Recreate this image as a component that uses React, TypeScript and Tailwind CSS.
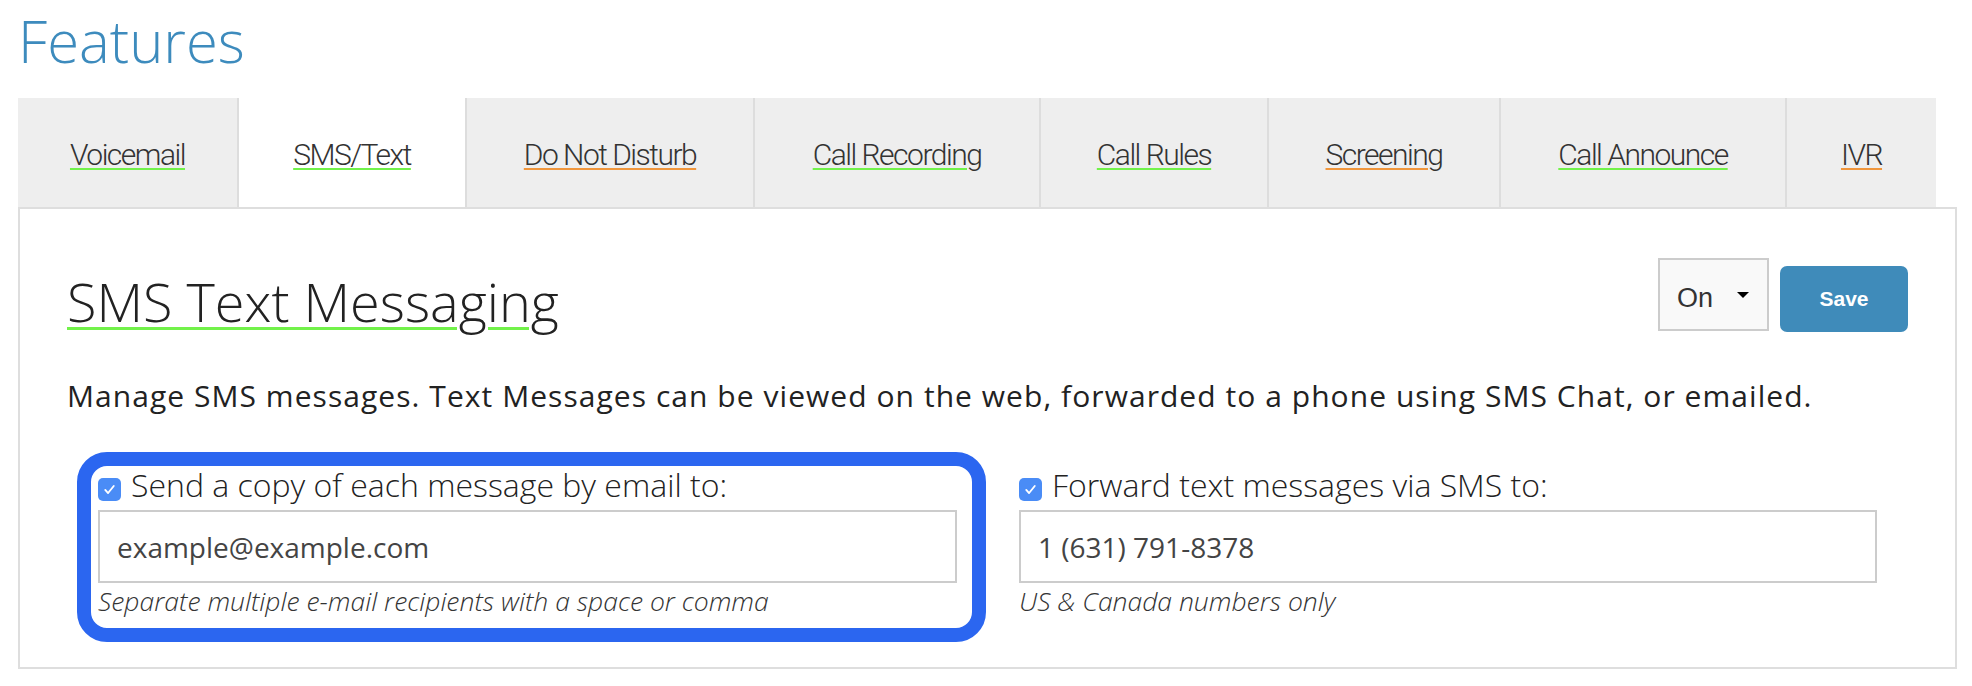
import clsx from 'clsx';

interface Tab {
    label: string;
    width: string;
    underline: string;
    active?: boolean;
}

const tabs: Tab[] = [
    { label: 'Voicemail', width: 'w-[221px]', underline: 'decoration-[#72f24a]' },
    { label: 'SMS/Text', width: 'w-[228px]', underline: 'decoration-[#72f24a]', active: true },
    { label: 'Do Not Disturb', width: 'w-[288px]', underline: 'decoration-[#f0963c]' },
    { label: 'Call Recording', width: 'w-[286px]', underline: 'decoration-[#72f24a]' },
    { label: 'Call Rules', width: 'w-[228px]', underline: 'decoration-[#72f24a]' },
    { label: 'Screening', width: 'w-[232px]', underline: 'decoration-[#f0963c]' },
    { label: 'Call Announce', width: 'w-[286px]', underline: 'decoration-[#72f24a]' },
    { label: 'IVR', width: 'w-[149px]', underline: 'decoration-[#f0963c]' },
];

function Checkbox() {
    return (
        <span className="mt-[11px] flex h-[23px] w-[23px] shrink-0 items-center justify-center rounded-[5px] bg-[#4a8cf6]">
            <svg viewBox="0 0 24 24" className="h-[17px] w-[17px]" fill="none" stroke="white" strokeWidth={2.6} strokeLinecap="round" strokeLinejoin="round">
                <path d="M6 12.5l4 4.5 8-10" />
            </svg>
        </span>
    );
}

interface FieldProps {
    label: string;
    value: string;
    hint: string;
}

function Field({ label, value, hint }: FieldProps) {
    return (
        <>
            <label className="flex h-[36px] items-start gap-[10px]">
                <Checkbox />
                <span className="text-[32px] leading-[36px] font-light whitespace-nowrap text-[#222]">{label}</span>
            </label>
            <input
                type="text"
                readOnly
                value={value}
                className="mt-[7px] block h-[73px] w-full border-2 border-[#cccccc] bg-white px-[17px] font-['Open_Sans',sans-serif] text-[28px] text-[#444] outline-none"
            />
            <p className="mt-[2px] text-[26.5px] leading-[32px] font-light whitespace-nowrap italic text-[#333]">{hint}</p>
        </>
    );
}

export default function App() {
    return (
        <div className="min-h-[686px] bg-white px-[18px] font-['Open_Sans',sans-serif] text-[#222]">
            <h1 className="pt-[12px] pb-[28px] text-[58px] leading-[58px] font-light text-[#3d8bbd]">Features</h1>

            {/* Tabs */}
            <nav className="flex h-[109px] w-[1918px]">
                {tabs.map((tab, index) => (
                    <div
                        key={tab.label}
                        className={clsx(
                            'flex justify-center pt-[42px]',
                            tab.width,
                            index < tabs.length - 1 && 'border-r-2 border-[#dddddd]',
                            tab.active ? 'bg-white' : 'bg-[#eeeeee]'
                        )}
                    >
                        <a
                            href="#"
                            className={clsx(
                                "h-[30px] font-['Roboto',sans-serif] text-[30px] leading-[30px] font-light tracking-[-1.5px] text-[#333] underline decoration-2 underline-offset-[3px]",
                                tab.underline
                            )}
                        >
                            {tab.label}
                        </a>
                    </div>
                ))}
            </nav>

            {/* Panel */}
            <section className="w-[1939px] border-2 border-[#dedede] px-[47px] pt-[49px] pb-[25px]">
                <div className="flex items-start justify-between">
                    <h2 className="mt-[16px] text-[54px] leading-[54px] font-light text-[#222] underline decoration-[#72f24a] decoration-[3px] underline-offset-[5px]">
                        SMS Text Messaging
                    </h2>
                    <div className="flex items-start gap-[11px]">
                        <div className="flex h-[73px] w-[111px] items-center justify-between border-2 border-[#cccccc] bg-[#f9f9f9] pr-[18px] pl-[17px]">
                            <span className="mt-[6px] font-['Liberation_Sans',sans-serif] text-[27px] leading-[30px] text-[#333]">On</span>
                            <span className="h-0 w-0 border-t-[6px] border-r-[6px] border-l-[6px] border-t-black border-r-transparent border-l-transparent" />
                        </div>
                        <button
                            type="button"
                            className="mt-[8px] flex h-[66px] w-[128px] items-center justify-center rounded-[7px] bg-[#3f8bba] font-['Liberation_Sans',sans-serif] text-[21px] font-bold text-white"
                        >
                            Save
                        </button>
                    </div>
                </div>

                <p className="mt-[45px] text-[30px] leading-[38px] tracking-[1.05px] whitespace-nowrap text-[#222]">
                    Manage SMS messages. Text Messages can be viewed on the web, forwarded to a phone using SMS Chat, or emailed.
                </p>

                <div className="mt-[37px] flex items-start">
                    {/* highlighted email column */}
                    <div className="ml-[10px] w-[909px] rounded-[30px] border-[14px] border-[#2b66f0] pt-[1px] pr-[15px] pb-[11px] pl-[7px]">
                        <Field
                            label="Send a copy of each message by email to:"
                            value="example@example.com"
                            hint="Separate multiple e-mail recipients with a space or comma"
                        />
                    </div>

                    <div className="ml-[33px] w-[858px] pt-[15px]">
                        <Field
                            label="Forward text messages via SMS to:"
                            value="1 (631) 791-8378"
                            hint="US & Canada numbers only"
                        />
                    </div>
                </div>
            </section>
        </div>
    );
}
